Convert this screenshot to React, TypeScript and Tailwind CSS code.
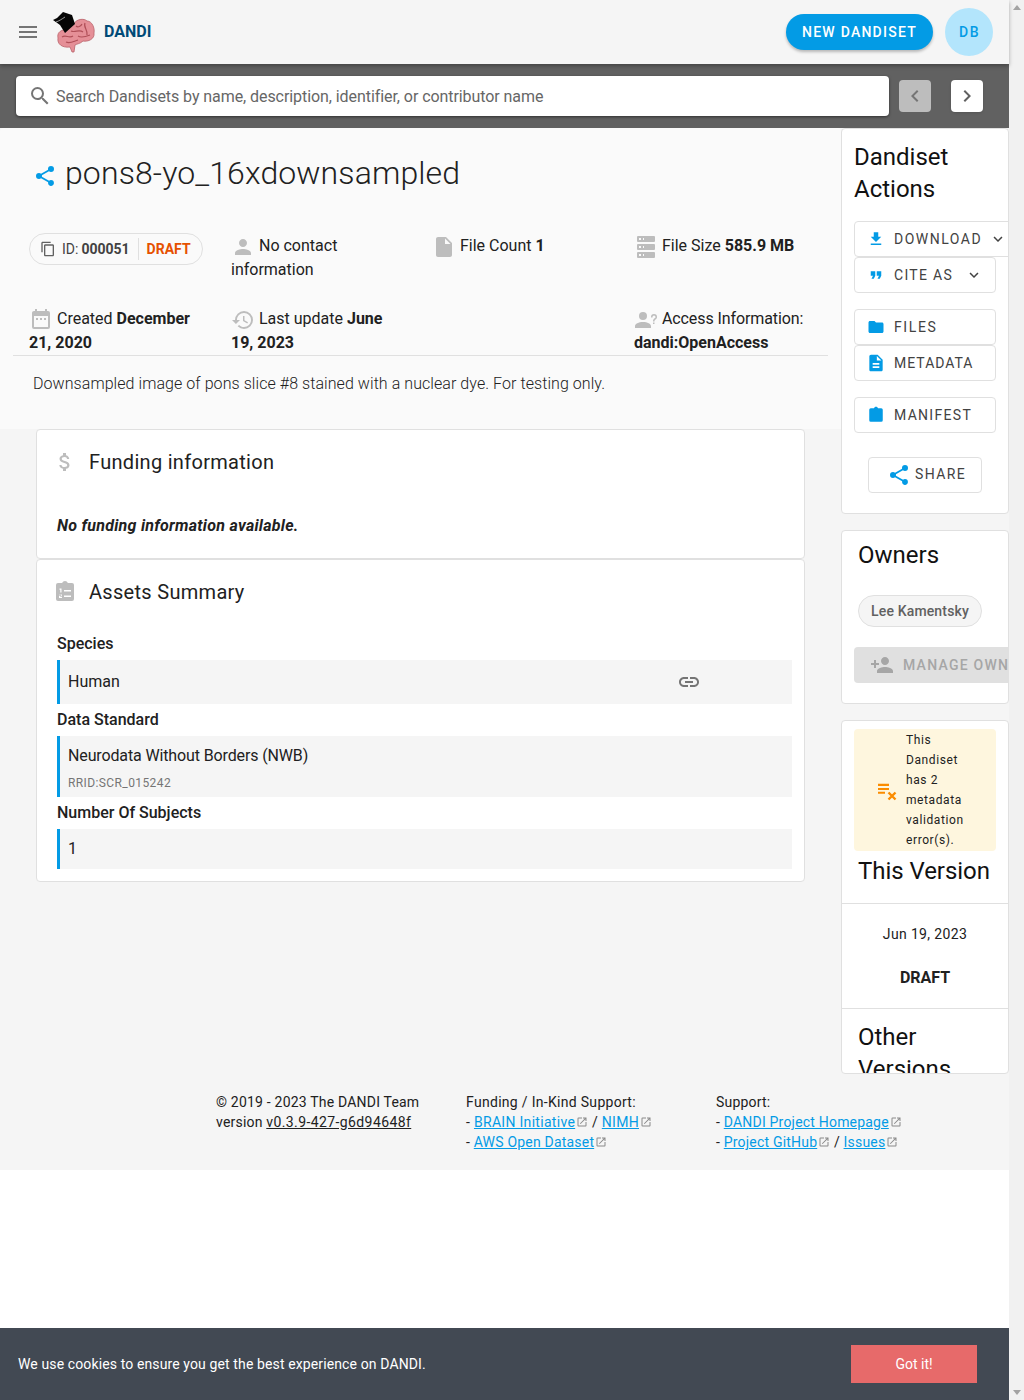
import React from "react";
import { MdMenu, MdSearch, MdChevronLeft, MdChevronRight, MdContentCopy, MdPerson, MdInsertDriveFile, MdHistory, MdAttachMoney, MdFolder, MdDescription, MdLink, MdPersonAdd, MdOpenInNew, MdExpandMore } from "react-icons/md";

const P = ({ d, className }: { d: string; className?: string }) => (
  <svg viewBox="0 0 24 24" fill="currentColor" className={className}><path d={d} /></svg>
);
const SHARE = "M18,16.08C17.24,16.08 16.56,16.38 16.04,16.85L8.91,12.7C8.96,12.47 9,12.24 9,12C9,11.76 8.96,11.53 8.91,11.3L15.96,7.19C16.5,7.69 17.21,8 18,8A3,3 0 0,0 21,5A3,3 0 0,0 18,2A3,3 0 0,0 15,5C15,5.24 15.04,5.47 15.09,5.7L8.04,9.81C7.5,9.31 6.79,9 6,9A3,3 0 0,0 3,12A3,3 0 0,0 6,15C6.79,15 7.5,14.69 8.04,14.19L15.16,18.34C15.11,18.55 15.08,18.77 15.08,19C15.08,20.61 16.39,21.91 18,21.91C19.61,21.91 20.92,20.61 20.92,19A2.92,2.92 0 0,0 18,16.08Z";
const CAL = "M9,10H7V12H9V10M13,10H11V12H13V10M17,10H15V12H17V10M19,3H18V1H16V3H8V1H6V3H5C3.89,3 3,3.9 3,5V19A2,2 0 0,0 5,21H19A2,2 0 0,0 21,19V5A2,2 0 0,0 19,3M19,19H5V8H19V19Z";
const DL = "M5,20H19V18H5M19,9H15V3H9V9H5L12,16L19,9Z";
const QUOTE = "M14,17H17L19,13V7H13V13H16M6,17H9L11,13V7H5V13H8L6,17Z";
const PLAIN_CLIP = "M19,3H14.82C14.4,1.84 13.3,1 12,1C10.7,1 9.6,1.84 9.18,3H5A2,2 0 0,0 3,5V19A2,2 0 0,0 5,21H19A2,2 0 0,0 21,19V5A2,2 0 0,0 19,3Z";
const SERVER = "M4,1H20A1,1 0 0,1 21,2V6A1,1 0 0,1 20,7H4A1,1 0 0,1 3,6V2A1,1 0 0,1 4,1M4,9H20A1,1 0 0,1 21,10V14A1,1 0 0,1 20,15H4A1,1 0 0,1 3,14V10A1,1 0 0,1 4,9M4,17H20A1,1 0 0,1 21,18V22A1,1 0 0,1 20,23H4A1,1 0 0,1 3,22V18A1,1 0 0,1 4,17M9,5H10V3H9V5M9,13H10V11H9V13M9,21H10V19H9V21M5,3V5H7V3H5M5,11V13H7V11H5M5,19V21H7V19H5Z";
const ACCOUNT_Q = "M13,8A4,4 0 0,1 9,12A4,4 0 0,1 5,8A4,4 0 0,1 9,4A4,4 0 0,1 13,8M17,18V20H1V18C1,15.79 4.58,14 9,14C13.42,14 17,15.79 17,18M20.5,14.5V16H19V14.5H20.5M18.5,9.5H17V9A3,3 0 0,1 20,6A3,3 0 0,1 23,9C23,9.97 22.5,10.88 21.71,11.41L21.41,11.6C20.84,12 20.5,12.61 20.5,13.3V13.5H19V13.3C19,12.11 19.6,11 20.59,10.35L20.88,10.16C21.27,9.9 21.5,9.47 21.5,9A1.5,1.5 0 0,0 20,7.5A1.5,1.5 0 0,0 18.5,9V9.5Z";

const Logo = () => (
  <svg viewBox="0 0 44 42" className="w-[44px] h-[42px]">
    <path d="M6 27 C5 22 8 20 11 19 L22 13 C24 8 32 7 35 10 C40 10 43 17 42 22 C43 28 36 31 31 30 C28 33 24 33 23 34 L22 41 L20 41 L18 36 C10 37 5 33 6 27Z" fill="#e58f97" stroke="#b9636b" strokeWidth="0.8" />
    <path d="M10 26 C14 23 17 28 21 25 M19 20 C23 22 27 18 31 21 M14 31 C18 33 22 30 26 29 M33 12 C31 16 36 19 35 24 M24 15 C26 17 29 15 30 13 M26 25 C29 27 33 26 38 24" fill="none" stroke="#b04f58" strokeWidth="1.2" />
    <path d="M1 9 L5 7 L11 1 L20 4 L23 13 L13 22 L8 14 Z" fill="#050505" />
    <path d="M4 11 C7 10 10 8 13 6" fill="none" stroke="#d8d8d8" strokeWidth="0.7" />
  </svg>
);

const ActionButton = ({ icon, label, arrow, wide, tracking }: { icon: React.ReactNode; label: string; arrow?: boolean; wide?: boolean; tracking: string }) => (
  <div className={`h-[36px] ${wide ? "w-[158px]" : "w-[142px]"} shrink-0 border border-[#e0e0e0] rounded flex items-center pl-[12px] bg-white`}>
    <span className="w-[18px] h-[18px] flex items-center justify-center text-[#039be5]">{icon}</span>
    <span className={`ml-[9px] text-[14px] ${tracking} text-[#424242] leading-none whitespace-nowrap`}>{label}</span>
    {arrow && <MdExpandMore className={`text-[#424242] w-[18px] h-[18px] ${wide ? "ml-[7px]" : "ml-[12px]"}`} />}
  </div>
);

const MetaIcon = ({ children }: { children: React.ReactNode }) => <span className="inline-block align-middle text-[#bdbdbd] -my-[4px]">{children}</span>;

const Ext = () => <MdOpenInNew className="inline-block w-[12px] h-[12px] ml-[1px] text-[#8a8a8a] align-[-1px]" />;
const A = ({ children }: { children: React.ReactNode }) => <a className="text-[#039be5] underline">{children}</a>;

const Section = ({ label, children, h, labelH }: { label: string; children: React.ReactNode; h: string; labelH: string }) => (
  <div>
    <div className={`${labelH} text-[16px] font-medium leading-[24px] text-[#212121]`}>{label}</div>
    <div className={`${h} border-l-[3px] border-[#039be5] bg-[#f5f5f5] pl-[8px]`}>{children}</div>
  </div>
);

export default function App() {
  return (
    <div className="relative w-[1024px] h-[1400px] overflow-hidden flex bg-white text-[#212121] font-['Roboto',sans-serif]">
      <div className="w-[1009px] shrink-0 flex flex-col">
        <header className="relative z-10 h-[64px] shrink-0 bg-[#f5f5f5] flex items-center pl-[16px] pr-[16px] shadow-[0_2px_4px_rgba(0,0,0,0.3)]">
          <MdMenu className="w-[24px] h-[24px] text-[#757575]" />
          <div className="ml-[12px]"><Logo /></div>
          <span className="ml-[8px] text-[16px] font-bold text-[#004a77]">DANDI</span>
          <div className="ml-auto h-[36px] w-[147px] rounded-full bg-[#039be5] text-white text-[14px] font-medium tracking-[1.25px] flex items-center justify-center shadow-[0_2px_3px_rgba(0,0,0,0.25)]">NEW DANDISET</div>
          <div className="ml-[12px] w-[48px] h-[48px] rounded-full bg-[#b3e5fc] text-[#039be5] text-[14px] font-medium tracking-[1.4px] flex items-center justify-center pl-[1px]">DB</div>
        </header>
        <div className="h-[64px] shrink-0 bg-[#616161] flex items-center pl-[16px]">
          <div className="w-[873px] h-[40px] bg-white rounded-[4px] flex items-center pl-[12px] shadow-[0_1px_3px_rgba(0,0,0,0.5)]">
            <MdSearch className="w-[24px] h-[24px] text-[#757575]" />
            <span className="ml-[4px] pt-[2px] text-[16px] tracking-[-0.07px] text-[#666]">Search Dandisets by name, description, identifier, or contributor name</span>
          </div>
          <div className="ml-[10px] w-[32px] h-[32px] rounded bg-[#bdbdbd] flex items-center justify-center"><MdChevronLeft className="w-[24px] h-[24px] text-[#757575]" /></div>
          <div className="ml-[20px] w-[32px] h-[32px] rounded bg-white flex items-center justify-center shadow"><MdChevronRight className="w-[24px] h-[24px] text-[#616161]" /></div>
        </div>

        <div className="h-[954px] shrink-0 bg-[#f5f5f5] flex flex-col">
          <div className="flex h-[954px]">
            <div className="w-[841px] shrink-0">
              <div className="h-[301px] bg-[#fafafa] rounded-t-[4px] flex flex-col">
                <div className="flex items-center pl-[33px] pt-[24px] h-[66px]">
                  <P d={SHARE} className="w-[24px] h-[24px] mt-[6px] text-[#039be5]" />
                  <h1 className="ml-[8px] text-[32px] font-light leading-[40px] tracking-[0.12px] text-[#212121]">pons8-yo_16xdownsampled</h1>
                </div>
                <div className="grid grid-cols-[202px_201px_202px_194px] pl-[29px] mt-[39px] text-[16px] leading-[24px]">
                  <div className="h-[73px]">
                    <div className="inline-flex items-center h-[32px] w-[174px] border border-[#e0e0e0] rounded-full pl-[10px] text-[14px]">
                      <MdContentCopy className="w-[16px] h-[16px] text-[#616161]" />
                      <span className="ml-[6px] text-[#424242]">ID:</span>
                      <b className="ml-[3px] font-bold text-[#424242]">000051</b>
                      <span className="ml-[8px] w-px h-[22px] bg-[#e0e0e0]" />
                      <b className="ml-[8px] font-bold text-[#e65100]">DRAFT</b>
                    </div>
                  </div>
                  <div className="h-[73px] pt-[1px] pr-[30px]"><MetaIcon><MdPerson className="w-[24px] h-[24px]" /></MetaIcon> No contact information</div>
                  <div className="h-[73px] pt-[1px]"><MetaIcon><MdInsertDriveFile className="w-[24px] h-[24px]" /></MetaIcon> File Count <b className="font-bold">1</b></div>
                  <div className="h-[73px] pt-[1px]"><MetaIcon><P d={SERVER} className="w-[24px] h-[24px]" /></MetaIcon> File Size <b className="font-bold">585.9 MB</b></div>
                  <div className="pt-[1px] pr-[20px]"><MetaIcon><P d={CAL} className="w-[24px] h-[24px]" /></MetaIcon> Created <b className="font-bold">December 21, 2020</b></div>
                  <div className="pt-[1px] pr-[30px]"><MetaIcon><MdHistory className="w-[24px] h-[24px]" /></MetaIcon> Last update <b className="font-bold">June 19, 2023</b></div>
                  <div />
                  <div className="pt-[1px]"><MetaIcon><P d={ACCOUNT_Q} className="w-[24px] h-[24px]" /></MetaIcon> <span className="tracking-[-0.1px]">Access Information:</span> <b className="font-bold">dandi:OpenAccess</b></div>
                </div>
                <div className="ml-[13px] w-[815px] h-px bg-[#e0e0e0]" />
                <p className="ml-[33px] mt-[16px] text-[16px] font-light leading-[24px] tracking-[0.065px]">Downsampled image of pons slice #8 stained with a nuclear dye. For testing only.</p>
              </div>
              <div className="ml-[36px] w-[769px]">
                <div className="h-[130px] bg-white border border-[#e0e0e0] rounded-[4px] px-[20px]">
                  <div className="flex items-center h-[64px] -ml-[4px]">
                    <MdAttachMoney className="w-[24px] h-[24px] text-[#bdbdbd]" />
                    <span className="ml-[12px] text-[20px] tracking-[0.3px] text-[#212121]">Funding information</span>
                  </div>
                  <p className="mt-[20px] text-[16px] font-bold italic leading-[24px] tracking-[0.27px]">No funding information available.</p>
                </div>
                <div className="h-[323px] bg-white border border-[#e0e0e0] rounded-[4px] pl-[20px] pr-[12px]">
                  <div className="flex items-center h-[64px] -ml-[4px]">
                    <svg viewBox="0 0 24 24" className="w-[24px] h-[24px] text-[#bdbdbd]" fill="currentColor">
                      <path d={PLAIN_CLIP} />
                      <path d="M6.5 8.5h2v4h-1.2v-2.8H6.5zM11 10h7v1.6h-7zM6 14.5h3v1.2h-1.8v1h1.8v1.3H6v-2.3h1.8v-.9H6zM11 15.5h7v1.6h-7z" fill="#fff" />
                    </svg>
                    <span className="ml-[12px] text-[20px] tracking-[0.3px] text-[#212121]">Assets Summary</span>
                  </div>
                  <div className="mt-[8px]">
                    <Section label="Species" labelH="h-[28px]" h="h-[44px]">
                      <div className="flex items-center h-full relative"><span className="leading-[24px]">Human</span><MdLink className="absolute left-[609px] w-[24px] h-[24px] text-[#757575]" /></div>
                    </Section>
                    <div className="mt-[3px]">
                      <Section label="Data Standard" labelH="h-[29px] pt-[1px]" h="h-[61px]">
                        <div className="pt-[8px] leading-[24px] tracking-[-0.13px]">Neurodata Without Borders (NWB)</div>
                        <div className="mt-[7px] text-[12px] leading-[16px] tracking-[0.4px] text-[#757575]">RRID:SCR_015242</div>
                      </Section>
                    </div>
                    <div className="mt-[4px]">
                      <Section label="Number Of Subjects" labelH="h-[28px]" h="h-[40px]">
                        <div className="flex items-center h-full leading-[24px]">1</div>
                      </Section>
                    </div>
                  </div>
                </div>
              </div>
            </div>

            <aside className="w-[168px] shrink-0 flex flex-col">
              <div className="h-[386px] bg-white border border-[#e0e0e0] rounded-[4px] overflow-hidden pl-[12px] flex flex-col shrink-0">
                <h2 className="mt-[12px] text-[24px] leading-[32px] text-[#111] w-[130px]">Dandiset Actions</h2>
                <div className="mt-[16px] flex flex-col w-[158px]">
                  <ActionButton wide arrow tracking="tracking-[1.5px]" icon={<P d={DL} className="w-[18px] h-[18px] shrink-0" />} label="DOWNLOAD" />
                  <ActionButton arrow tracking="tracking-[1.3px]" icon={<P d={QUOTE} className="w-[18px] h-[18px] shrink-0" />} label="CITE AS" />
                  <div className="h-[16px]" />
                  <ActionButton tracking="tracking-[1.6px]" icon={<MdFolder className="w-[18px] h-[18px] shrink-0" />} label="FILES" />
                  <ActionButton tracking="tracking-[1px]" icon={<MdDescription className="w-[20px] h-[20px] shrink-0" />} label="METADATA" />
                  <div className="h-[16px]" />
                  <ActionButton tracking="tracking-[1.3px]" icon={<P d={PLAIN_CLIP} className="w-[18px] h-[18px] shrink-0" />} label="MANIFEST" />
                </div>
                <div className="mt-[24px] ml-[14px] w-[114px] h-[36px] border border-[#e0e0e0] rounded flex items-center pl-[18px]">
                  <P d={SHARE} className="w-[24px] h-[24px] text-[#039be5] shrink-0" />
                  <span className="ml-[4px] pb-[2px] text-[14px] tracking-[1.4px] text-[#424242]">SHARE</span>
                </div>
              </div>
              <div className="mt-[16px] h-[174px] bg-white border border-[#e0e0e0] rounded-[4px] overflow-hidden shrink-0">
                <h2 className="ml-[16px] mt-[8px] text-[24px] leading-[32px] text-[#111]">Owners</h2>
                <div className="ml-[16px] mt-[24px] h-[32px] w-[124px] rounded-full bg-[#f5f5f5] border border-[#e0e0e0] flex items-center justify-center text-[14px] font-medium tracking-[0.15px] text-[#616161]">Lee Kamentsky</div>
                <div className="ml-[12px] mt-[20px] h-[36px] w-[200px] rounded bg-[#e0e0e0] flex items-center pl-[16px] text-[#a6a6a6]">
                  <MdPersonAdd className="w-[24px] h-[24px] shrink-0" />
                  <span className="ml-[9px] text-[14px] font-medium tracking-[1.25px] whitespace-nowrap">MANAGE OWNERS</span>
                </div>
              </div>
              <div className="mt-[16px] h-[354px] bg-white border border-[#e0e0e0] rounded-[4px] overflow-hidden shrink-0">
                <div className="ml-[12px] mt-[8px] w-[142px] h-[122px] rounded bg-[#fef6de] flex items-center pl-[20px]">
                  <svg viewBox="0 0 24 24" className="w-[24px] h-[24px] shrink-0 text-[#fb8c00]" fill="currentColor">
                    <path d="M4 5.7h11v2.3H4zM4 9.9h11v2.1H4zM4 13.7h7v2H4z" />
                    <path d="M14.5 14.5l7 7M21.5 14.5l-7 7" stroke="currentColor" strokeWidth="2.4" fill="none" />
                  </svg>
                  <div className="ml-[8px] w-[70px] text-[12px] leading-[20px] tracking-[0.6px] text-[#212121]">This Dandiset has 2 metadata validation error(s).</div>
                </div>
                <h2 className="ml-[16px] mt-[4px] text-[24px] leading-[32px] text-[#111] tracking-[-0.05px]">This Version</h2>
                <div className="mt-[16px] h-px bg-[#e0e0e0]" />
                <div className="mt-[20px] text-center text-[14px] tracking-[0.35px] leading-[20px]">Jun 19, 2023</div>
                <div className="mt-[22px] text-center text-[16px] font-bold leading-[24px]">DRAFT</div>
                <div className="mt-[18px] h-px bg-[#e0e0e0]" />
                <h2 className="ml-[16px] mt-[12px] text-[24px] leading-[32px] text-[#111] w-[100px]">Other Versions</h2>
              </div>
            </aside>
          </div>
        </div>

        <footer className="h-[88px] shrink-0 bg-[#f5f5f5] pl-[216px] pt-[10px] flex text-[14px] leading-[20px] tracking-[0.2px] text-[#212121]">
          <div className="w-[250px]">
            <div>© 2019 - 2023 The DANDI Team</div>
            <div>version <span className="underline tracking-[0.4px]">v0.3.9-427-g6d94648f</span></div>
          </div>
          <div className="w-[250px] tracking-[0.3px]">
            <div>Funding / In-Kind Support:</div>
            <div>- <A>BRAIN Initiative</A><Ext /> / <A>NIMH</A><Ext /></div>
            <div className="tracking-[0.2px]">- <A>AWS Open Dataset</A><Ext /></div>
          </div>
          <div className="w-[250px]">
            <div>Support:</div>
            <div>- <A>DANDI Project Homepage</A><Ext /></div>
            <div>- <A>Project GitHub</A><Ext /> / <A>Issues</A><Ext /></div>
          </div>
        </footer>
      </div>

      <div className="w-[15px] shrink-0 bg-[#f1f1f1] flex flex-col items-center justify-between py-[5px]">
        <div className="w-0 h-0 border-l-[4px] border-r-[4px] border-b-[5px] border-l-transparent border-r-transparent border-b-[#a3a3a3]" />
        <div className="w-0 h-0 border-l-[4px] border-r-[4px] border-t-[5px] border-l-transparent border-r-transparent border-t-[#a3a3a3]" />
      </div>

      <div className="absolute left-0 bottom-0 w-[1009px] h-[72px] bg-[#424953] flex items-center pl-[18px]">
        <span className="text-[14px] tracking-[0.12px] text-white">We use cookies to ensure you get the best experience on DANDI.</span>
        <div className="ml-auto mr-[32px] w-[126px] h-[38px] bg-[#e76a6a] text-white text-[14px] flex items-center justify-center">Got it!</div>
      </div>
    </div>
  );
}
